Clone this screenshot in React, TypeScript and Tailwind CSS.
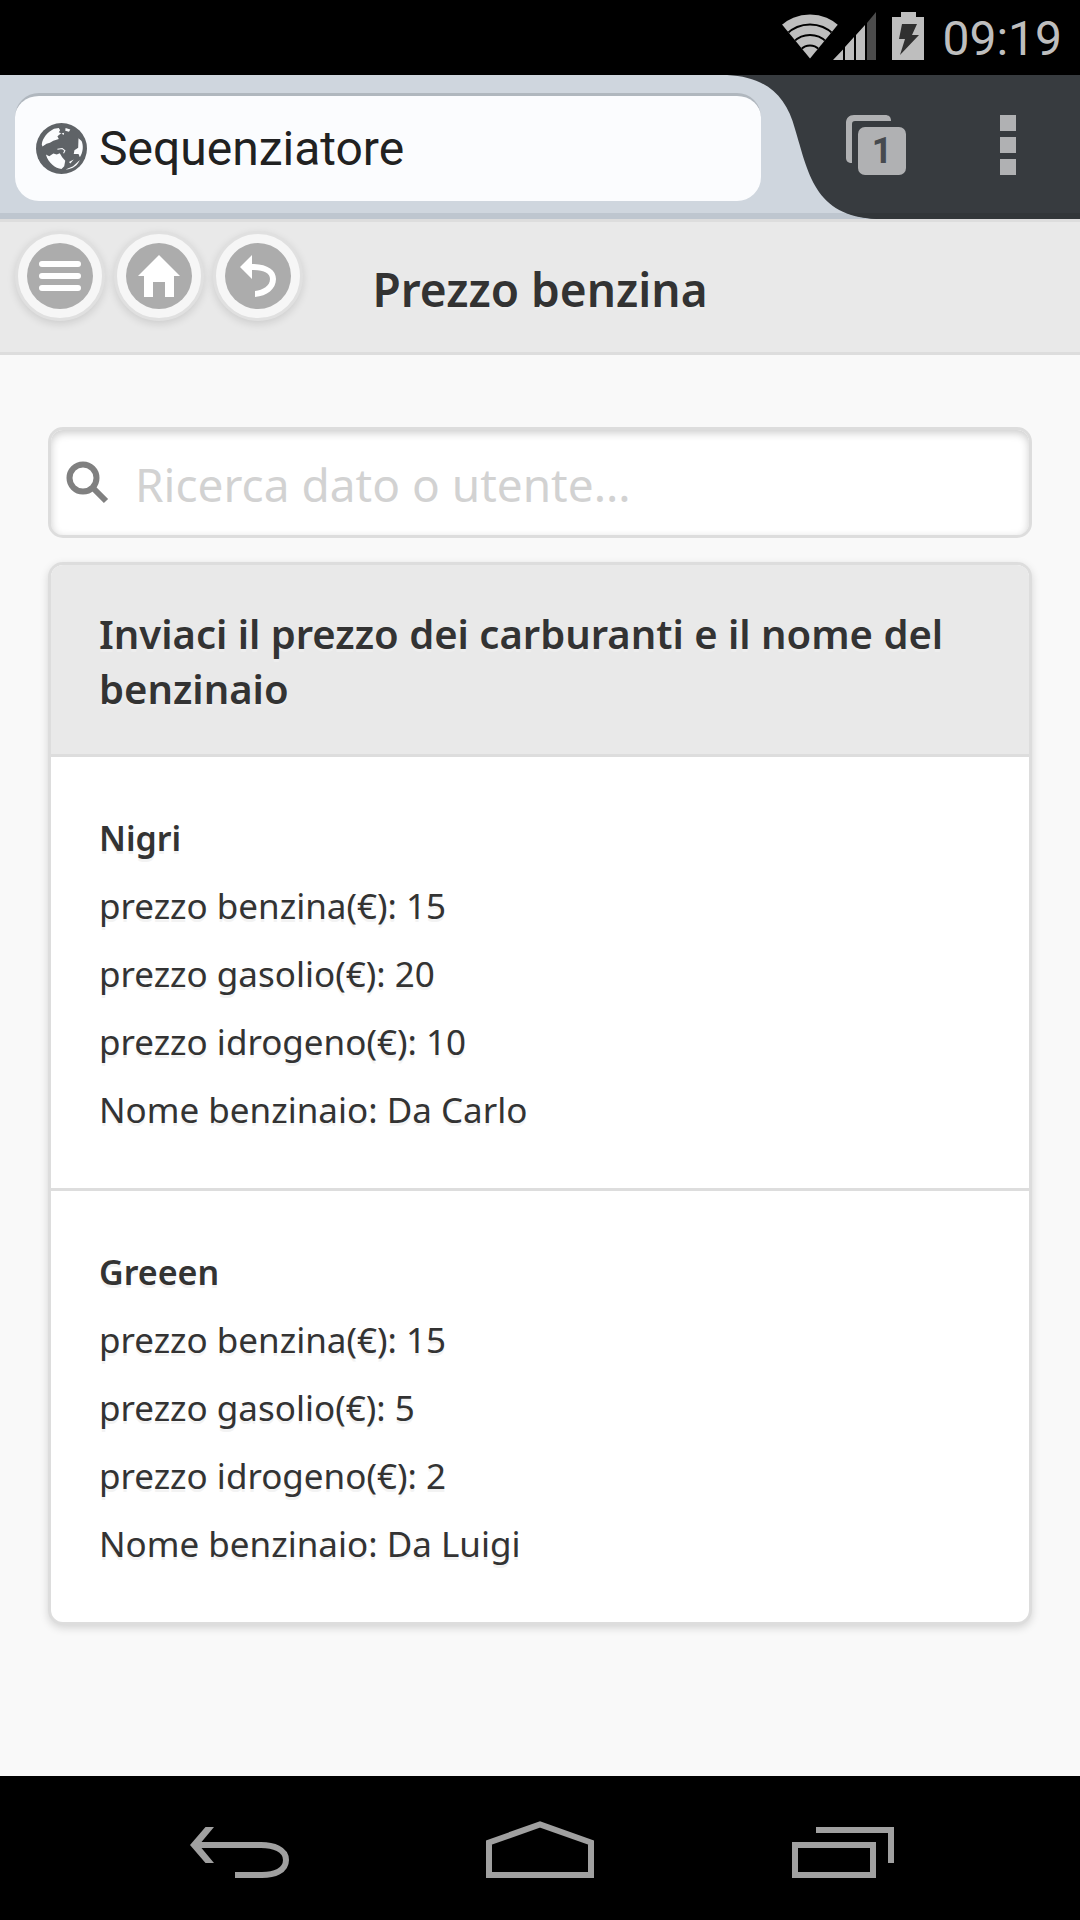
import React from "react";

const groups = [
  {
    name: "Nigri",
    rows: ["prezzo benzina(€): 15", "prezzo gasolio(€): 20", "prezzo idrogeno(€): 10", "Nome benzinaio: Da Carlo"],
  },
  {
    name: "Greeen",
    rows: ["prezzo benzina(€): 15", "prezzo gasolio(€): 5", "prezzo idrogeno(€): 2", "Nome benzinaio: Da Luigi"],
  },
];

function StatusBar() {
  return (
    <div className="flex h-[75px] items-center justify-end bg-black pr-[18px] text-[#bebebe] [text-shadow:none]">
      <svg className="h-[75px] w-[150px]" viewBox="0 0 150 75" fill="none" aria-hidden="true">
        <defs>
          <clipPath id="fan">
            <path d="M-2 22 L28 58.500 L58 22 L58 0 L-2 0Z" />
          </clipPath>
        </defs>
        <g clipPath="url(#fan)">
          <circle cx="28" cy="58" r="43.500" fill="#bebebe" />
          <g stroke="#000" strokeWidth="2">
            <circle cx="28" cy="58" r="33.500" />
            <circle cx="28" cy="58" r="23" />
            <circle cx="28" cy="58" r="12.500" />
          </g>
        </g>
        <path d="M51 60 L61 49.500 V60Z M63 47 L72 37 V60 H63Z M74 35 L83 25 V60 H74Z" fill="#bebebe" />
        <path d="M85 23 L94 12 V60 H85Z" fill="#4c4c4c" />
        <path d="M119 12 H134 V17 H142 V60 H110 V17 H119Z" fill="#bebebe" />
        <path d="M120 24 H135 L130 35 H137 L118 55 L123 39 H117Z" fill="#303030" />
      </svg>
      <time className="ml-[10px] pt-[3px] font-[Roboto,sans-serif] text-[48px] leading-none">09:19</time>
    </div>
  );
}

function BrowserBar() {
  return (
    <div className="flex h-[144px] border-b-6 border-[#bec6cf] bg-[#cfd6de] [text-shadow:none]">
      <div className="flex min-w-0 flex-1 items-start pt-[18px] pl-[15px]">
        <label className="flex h-[108px] flex-1 items-center gap-3 rounded-[24px] border-t-3 border-[#b0b7be] bg-[#fbfcfe] pl-[21px]">
          <svg className="size-[51px] shrink-0" viewBox="21 21 150 150" aria-hidden="true">
            <circle cx="96" cy="96" r="75" fill="#5f6367" />
            <path
              fill="#fbfcfe"
              d="M38 84 C40 66 54 48 74 38 L88 36 L92 42 L88 48 L95 51 L84 60 L88 68 L72 73 L62 79 L52 82 L40 90Z M50 114 L60 119 L72 111 L82 114 L91 110 L98 122 L107 132 L104 148 L96 156 C78 155 58 140 50 114Z M108 36 L122 40 L118 47 L107 44Z M96 52 L104 50 L102 56Z M146 66 L155 74 C161 88 160 106 150 122 L146 112 L132 112 L134 101 L145 94Z M108 158 L130 148 L150 130 C144 145 130 157 108 158Z M118 136 L132 128 L122 140Z"
            />
            <path fill="none" stroke="#fbfcfe" strokeWidth="3" d="M84 98 L98 96 L106 102 L102 110" />
          </svg>
          <input
            aria-label="Indirizzo"
            defaultValue="Sequenziatore"
            className="w-full min-w-0 bg-transparent font-[Roboto,sans-serif] text-[48px] text-[#212121] outline-none"
          />
        </label>
      </div>
      <div className="relative flex h-[144px] w-[319px] shrink-0 items-start justify-end gap-[94px] pt-10 pr-16">
        <svg className="absolute inset-0 h-[144px] w-full overflow-visible" viewBox="0 0 319 144" aria-hidden="true">
          <path fill="#373b3f" d="M-34 0 H319 V144 H116 C53 142 47 96 34 54 C25 20 5 2 -34 0Z" />
          <path fill="#323639" d="M86 138 H319 V144 H116 C103 143 94 141 86 138Z" />
        </svg>
        <button aria-label="Schede aperte" className="relative flex size-[60px] items-end justify-end">
          <svg className="absolute inset-0 size-[60px]" viewBox="0 0 60 60" fill="#b0b1b3" aria-hidden="true">
            <path d="M6 48 C2 48 0 46 0 43 V8 C0 3 3 0 8 0 H39 C43 0 45 2 45 6 H9 C7 6 6 7 6 9Z" />
            <rect x="12" y="12" width="48" height="48" rx="7" />
          </svg>
          <span className="relative w-12 text-center font-[Roboto,sans-serif] text-[36px] leading-[48px] font-bold text-[#464a4f]">1</span>
        </button>
        <button aria-label="Altre opzioni" className="relative flex flex-col gap-[6px]">
          <span className="size-4 bg-[#b0b1b3]" />
          <span className="size-4 bg-[#b0b1b3]" />
          <span className="size-4 bg-[#b0b1b3]" />
        </button>
      </div>
    </div>
  );
}

function RoundButton({ label, children }: { label: string; children: React.ReactNode }) {
  return (
    <button
      aria-label={label}
      className="flex size-[90px] items-center justify-center rounded-full border-3 border-[#e0e0e0] bg-[#f6f6f6] shadow-[0_3px_9px_rgba(0,0,0,0.12)]"
    >
      <svg className="size-[66px]" viewBox="0 0 66 66" aria-hidden="true">
        <circle cx="33" cy="33" r="33" fill="#acacac" />
        {children}
      </svg>
    </button>
  );
}

function NavButton({ label, children }: { label: string; children: React.ReactNode }) {
  return (
    <button aria-label={label}>
      <svg className="h-[57px] w-[108px]" viewBox="0 0 108 57" fill="none" stroke="#a0a0a0" strokeWidth="6" aria-hidden="true">
        {children}
      </svg>
    </button>
  );
}

export default function App() {
  return (
    <div className="flex min-h-screen flex-col bg-[#f9f9f9] font-['Noto_Sans',sans-serif] text-[#333] [text-shadow:0_3px_0_#f3f3f3]">
      <StatusBar />
      <BrowserBar />
      <header className="grid h-[136px] grid-cols-[1fr_auto_1fr] border-y-3 border-[#ddd] bg-[#e9e9e9]">
        <nav className="flex gap-[9px] pt-[9px] pl-[15px]">
          <RoundButton label="Menu">
            <path d="M15 21H51M15 33H51M15 45H51" stroke="#fff" strokeWidth="6" strokeLinecap="round" />
          </RoundButton>
          <RoundButton label="Home">
            <path d="M33 12 L54 33 H48 V54 H39 V39 H27 V54 H18 V33 H12Z" fill="#fff" />
          </RoundButton>
          <RoundButton label="Indietro">
            <path d="M15 24 L27 12 V21 C42 21 51 27 51 36 C51 46 42 53 30 54 V48 C38 47 45 43 45 36 C45 30 39 27 27 27 V36Z" fill="#fff" />
          </RoundButton>
        </nav>
        <h1 className="self-center pt-1 text-[46px] leading-[60px] font-semibold [text-shadow:0_3px_0_#eee]">Prezzo benzina</h1>
      </header>
      <main className="flex-1 px-12 pt-[72px] pb-[150px]">
        <label className="flex h-[111px] items-center gap-[25px] rounded-[15px] border-3 border-[#ddd] bg-white pl-[15px] shadow-[inset_0_3px_9px_rgba(0,0,0,0.2)]">
          <svg className="size-[44px] shrink-0" viewBox="0 0 44 44" fill="none" stroke="#808080" aria-hidden="true">
            <circle cx="17" cy="17" r="13.500" strokeWidth="6" />
            <path d="M27 27 L40 40" strokeWidth="6" />
          </svg>
          <input
            placeholder="Ricerca dato o utente..."
            aria-label="Ricerca dato o utente"
            className="w-full min-w-0 bg-transparent pt-1 text-[46px] outline-none placeholder:text-[#d2d2d2]"
          />
        </label>
        <section className="mt-6 overflow-hidden rounded-[15px] border-3 border-[#ddd] bg-white shadow-[0_3px_9px_rgba(0,0,0,0.15)]">
          <h2 className="border-b-3 border-[#ddd] bg-[#e9e9e9] px-12 pt-[41px] pb-[38px] text-[40px] leading-[55px] font-semibold [text-shadow:0_3px_0_#eee]">
            Inviaci il prezzo dei carburanti e il nome del benzinaio
          </h2>
          {groups.map((g) => (
            <article key={g.name} className="border-b-3 border-[#ddd] px-12 pt-[47px] pb-11 text-[35px] leading-[68px] last:border-b-0">
              <h3 className="text-[34px] font-semibold">{g.name}</h3>
              {g.rows.map((r) => (
                <p key={r}>{r}</p>
              ))}
            </article>
          ))}
        </section>
      </main>
      <nav className="flex h-[144px] items-center justify-center gap-[192px] bg-black pt-[3px]">
        <NavButton label="Indietro">
          <path d="M11 24 H75 C87 24 100 28 100 39 C100 50 88 54 76 54 H49" />
          <path d="M4 24 L19.500 6 H28 L13 24 L28 42 H19.500Z" fill="#a0a0a0" stroke="none" />
        </NavButton>
        <NavButton label="Schermata principale">
          <path d="M3 21.500 L54 3.500 L105 21.500 V54 H3Z" />
        </NavButton>
        <NavButton label="Applicazioni recenti">
          <path d="M9 24 H87 V54 H9Z M30 9 H105 V42" />
        </NavButton>
      </nav>
    </div>
  );
}
